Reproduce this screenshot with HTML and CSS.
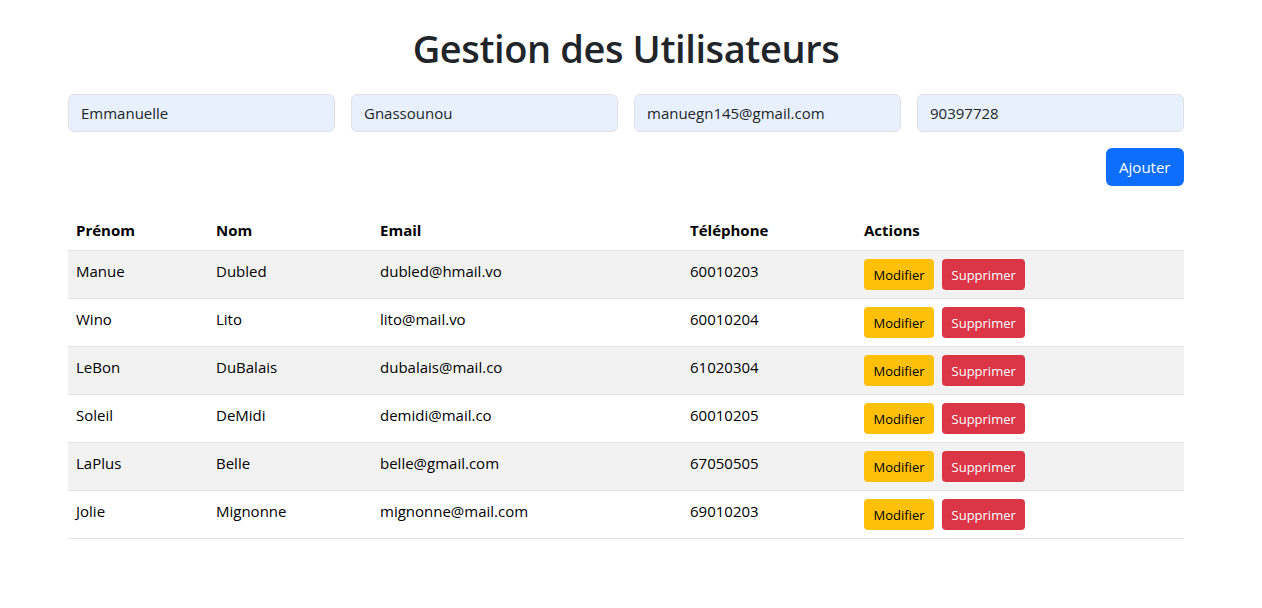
FILE: index.html
```html
<!DOCTYPE html>
<html lang="fr">
<head>
<meta charset="utf-8">
<title>Gestion des Utilisateurs</title>
<link rel="stylesheet" href="styles.css">
</head>
<body>
<div class="container">
  <h1 class="title">Gestion des Utilisateurs</h1>
  <form class="user-form">
    <div class="fields">
      <input class="field" type="text" value="Emmanuelle">
      <input class="field" type="text" value="Gnassounou">
      <input class="field" type="email" value="manuegn145@gmail.com">
      <input class="field" type="text" value="90397728">
    </div>
    <div class="form-actions">
      <button type="button" class="btn btn-primary">Ajouter</button>
    </div>
  </form>
  <table class="users">
    <colgroup>
      <col class="c1"><col class="c2"><col class="c3"><col class="c4"><col class="c5">
    </colgroup>
    <thead>
      <tr><th>Prénom</th><th>Nom</th><th>Email</th><th>Téléphone</th><th>Actions</th></tr>
    </thead>
    <tbody>
      <tr><td>Manue</td><td>Dubled</td><td>dubled@hmail.vo</td><td>60010203</td><td><div class="acts"><button class="btn btn-sm btn-warning">Modifier</button><button class="btn btn-sm btn-danger">Supprimer</button></div></td></tr>
      <tr><td>Wino</td><td>Lito</td><td>lito@mail.vo</td><td>60010204</td><td><div class="acts"><button class="btn btn-sm btn-warning">Modifier</button><button class="btn btn-sm btn-danger">Supprimer</button></div></td></tr>
      <tr><td>LeBon</td><td>DuBalais</td><td>dubalais@mail.co</td><td>61020304</td><td><div class="acts"><button class="btn btn-sm btn-warning">Modifier</button><button class="btn btn-sm btn-danger">Supprimer</button></div></td></tr>
      <tr><td>Soleil</td><td>DeMidi</td><td>demidi@mail.co</td><td>60010205</td><td><div class="acts"><button class="btn btn-sm btn-warning">Modifier</button><button class="btn btn-sm btn-danger">Supprimer</button></div></td></tr>
      <tr><td>LaPlus</td><td>Belle</td><td>belle@gmail.com</td><td>67050505</td><td><div class="acts"><button class="btn btn-sm btn-warning">Modifier</button><button class="btn btn-sm btn-danger">Supprimer</button></div></td></tr>
      <tr><td>Jolie</td><td>Mignonne</td><td>mignonne@mail.com</td><td>69010203</td><td><div class="acts"><button class="btn btn-sm btn-warning">Modifier</button><button class="btn btn-sm btn-danger">Supprimer</button></div></td></tr>
    </tbody>
  </table>
</div>
</body>
</html>
```
FILE: styles.css
```css
* { box-sizing: border-box; }
html, body { margin: 0; padding: 0; background: #fff; }
body {
  font-family: "Open Sans", "Noto Sans", "Liberation Sans", sans-serif;
  font-size: 16px;
  line-height: 1.5;
  color: #212529;
}
.container {
  width: 1116px;
  margin: 0 0 0 68px;
  padding-top: 24px;
}
.title {
  margin: 0 0 22px 0;
  font-size: 38px;
  font-weight: 600;
  line-height: 48px;
  letter-spacing: -0.4px;
  text-align: center;
  color: #212529;
}
.user-form { margin: 0 0 24px 0; }
.fields {
  display: grid;
  grid-template-columns: repeat(4, 1fr);
  gap: 16px;
}
.field {
  height: 38px;
  padding: 6px 12px;
  font: inherit;
  font-size: 15px;
  color: #212529;
  background: #e8f0fe;
  border: 1px solid #dee2e6;
  border-radius: 6px;
  width: 100%;
}
.form-actions {
  display: flex;
  justify-content: flex-end;
  margin-top: 16px;
}
.btn {
  font-family: inherit;
  border: 1px solid transparent;
  cursor: pointer;
}
.btn-primary {
  height: 38px;
  padding: 0 12.5px;
  font-size: 15px;
  color: #fff;
  background: #0d6efd;
  border-radius: 6px;
}
.users {
  width: 100%;
  border-collapse: collapse;
  table-layout: fixed;
  color: #000;
  font-size: 15px;
}
.c1 { width: 140px; }
.c2 { width: 164px; }
.c3 { width: 310px; }
.c4 { width: 174px; }
.c5 { width: 328px; }
.users th, .users td {
  padding: 8px;
  text-align: left;
  vertical-align: top;
  border-bottom: 1px solid #dee2e6;
  line-height: 24px;
}
.users th { font-weight: 700; height: 40px; }
.users tbody tr:nth-child(odd) td { background: #f2f2f2; }
.acts { display: flex; gap: 8px; }
.btn-sm {
  height: 31px;
  padding: 0 8.5px;
  font-size: 13px;
  border-radius: 4px;
}
.btn-warning { background: #ffc107; color: #000; }
.btn-danger { background: #dc3545; color: #fff; }
```
